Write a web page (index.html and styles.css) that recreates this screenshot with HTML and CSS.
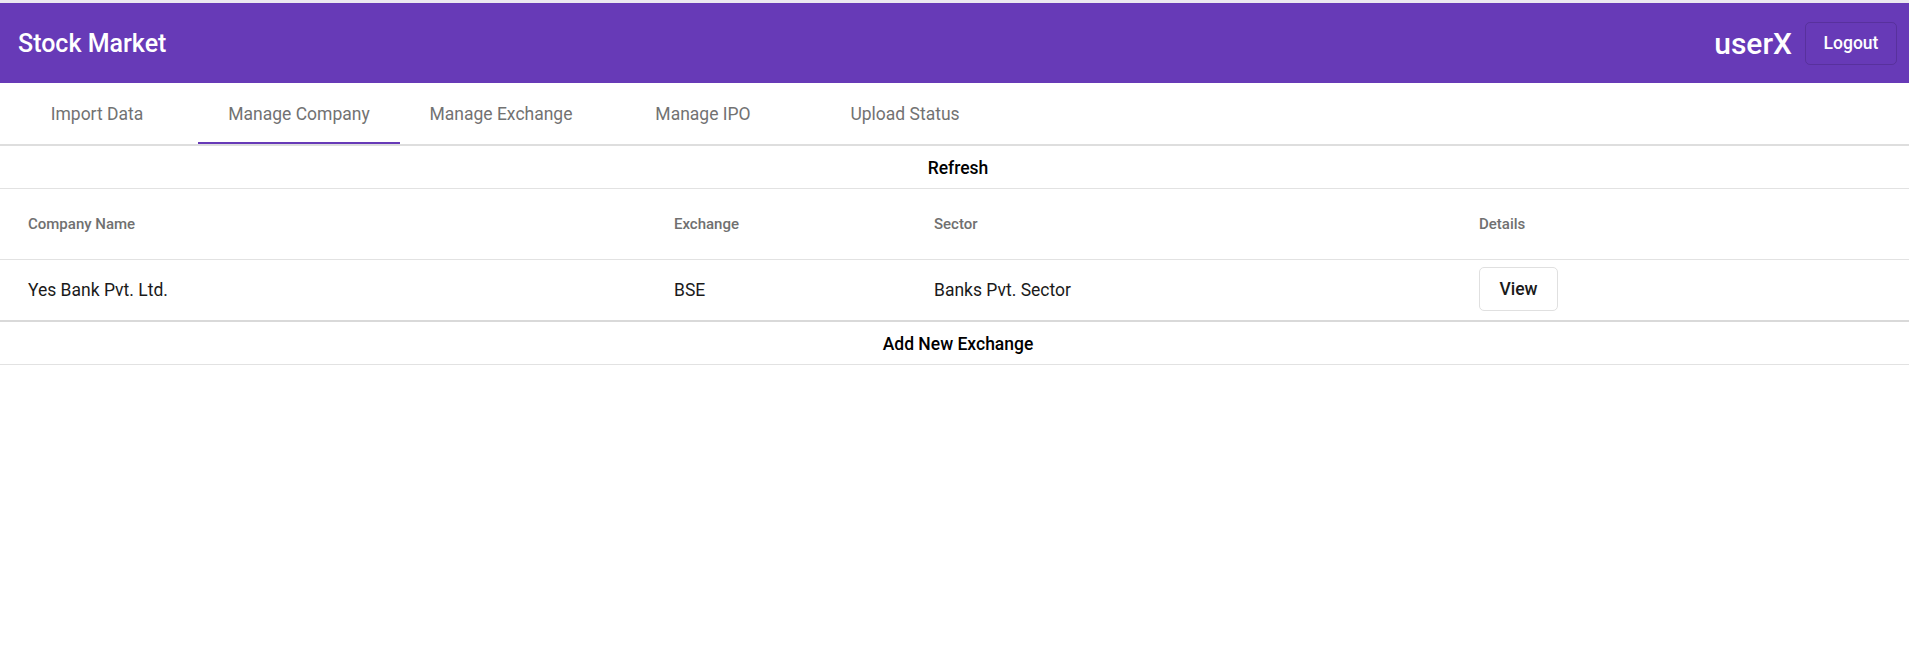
FILE: index.html
```html
<!DOCTYPE html>
<html lang="en">
<head>
<meta charset="utf-8">
<title>Stock Market</title>
<link rel="stylesheet" href="styles.css">
</head>
<body>
<div class="topband"></div>
<header class="toolbar">
  <div class="title">Stock Market</div>
  <div class="spacer"></div>
  <div class="user">userX</div>
  <button class="logout">Logout</button>
</header>
<nav class="tabs">
  <div class="tab-list">
    <div class="tab">Import Data</div>
    <div class="tab active">Manage Company</div>
    <div class="tab">Manage Exchange</div>
    <div class="tab">Manage IPO</div>
    <div class="tab">Upload Status</div>
  </div>
</nav>
<main>
  <div class="action-row refresh">Refresh</div>
  <div class="table">
    <div class="row head">
      <div class="cell">Company Name</div>
      <div class="cell">Exchange</div>
      <div class="cell">Sector</div>
      <div class="cell">Details</div>
    </div>
    <div class="row data">
      <div class="cell">Yes Bank Pvt. Ltd.</div>
      <div class="cell">BSE</div>
      <div class="cell">Banks Pvt. Sector</div>
      <div class="cell"><button class="view">View</button></div>
    </div>
  </div>
  <div class="action-row add">Add New Exchange</div>
</main>
</body>
</html>
```
FILE: styles.css
```css
* { box-sizing: border-box; }
html, body {
  margin: 0;
  padding: 0;
  background: #ffffff;
  font-family: Roboto, "Liberation Sans", Arial, sans-serif;
}
.topband {
  height: 3px;
  background: #ebe8f0;
}
.toolbar {
  height: 80px;
  background: #673ab7;
  color: #ffffff;
  display: flex;
  align-items: center;
  padding: 0 12px 0 18px;
}
.title {
  font-size: 25px;
  font-weight: 500;
  letter-spacing: 0;
}
.spacer { flex: 1; }
.user {
  font-size: 30px;
  font-weight: 500;
  margin-right: 13px;
}
.logout {
  width: 92px;
  height: 43px;
  border: 1px solid rgba(0, 0, 0, 0.14);
  border-radius: 5px;
  background: transparent;
  color: #ffffff;
  font-family: inherit;
  font-size: 17.5px;
  font-weight: 500;
  padding: 0;
  cursor: pointer;
}
.tabs {
  height: 63px;
  border-bottom: 2px solid #dedede;
  overflow: hidden;
}
.tab-list {
  display: flex;
  margin-left: -4px;
  height: 61px;
}
.tab {
  width: 202px;
  height: 61px;
  display: flex;
  align-items: center;
  justify-content: center;
  padding-top: 3px;
  font-size: 17.5px;
  color: #727272;
  border-bottom: 2px solid transparent;
}
.tab.active {
  border-bottom-color: #673ab7;
}
.action-row {
  height: 43px;
  display: flex;
  align-items: center;
  justify-content: center;
  font-size: 17.5px;
  font-weight: 500;
  color: #000000;
  border-bottom: 1px solid #e2e2e2;
  padding-left: 7px;
  padding-top: 2px;
}
.row {
  display: grid;
  grid-template-columns: 646px 260px 545px 1fr;
  padding-left: 28px;
  align-items: center;
}
.row.head {
  height: 71px;
  border-bottom: 1px solid #e2e2e2;
  font-size: 15px;
  font-weight: 500;
  color: #707070;
}
.row.data {
  height: 62px;
  border-bottom: 2px solid #d9d9d9;
  font-size: 17.5px;
  color: #1a1a1a;
}
.view {
  width: 79px;
  height: 44px;
  border: 1px solid #e0e0e0;
  border-radius: 5px;
  background: #ffffff;
  color: #1a1a1a;
  font-family: inherit;
  font-size: 17.5px;
  font-weight: 500;
  padding: 0;
  margin-top: -2px;
}
```
